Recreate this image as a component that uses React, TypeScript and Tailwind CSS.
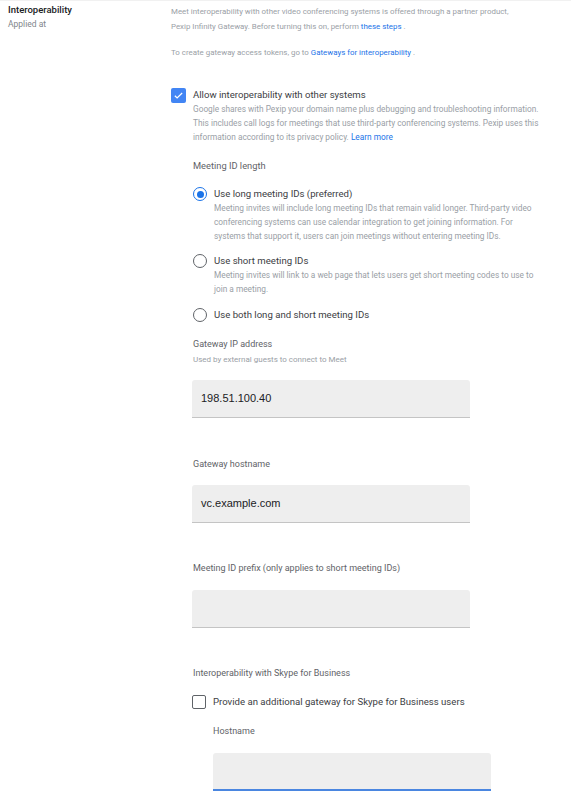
import React from "react";

const Input = ({ value, active, className = "" }: { value?: string; active?: boolean; className?: string }) => (
  <div
    className={`w-[278px] h-[38px] bg-[#eeeeee] rounded-t-[3px] flex items-center px-[9px] ${
      active ? "border-b-2 border-[#4a86e0]" : "border-b border-[#c4c4c4]"
    } ${className}`}
  >
    <span className="text-[11px] text-[#202124]" style={{ fontFamily: '"Liberation Sans", Arial, sans-serif' }}>
      {value}
    </span>
  </div>
);

const Radio = ({ checked }: { checked?: boolean }) => (
  <div
    className={`w-[14px] h-[14px] rounded-full border-[1.5px] flex items-center justify-center shrink-0 ${
      checked ? "border-[#1a73e8]" : "border-[#5f6368]"
    }`}
  >
    {checked && <div className="w-[7px] h-[7px] rounded-full bg-[#1a73e8]" />}
  </div>
);

export default function App() {
  return (
    <div
      className="w-[571px] h-[800px] bg-white flex overflow-hidden border-t border-[#f1f1f1]"
      style={{ fontFamily: 'Roboto, "Noto Sans", sans-serif' }}
    >
      <div className="w-[171px] shrink-0 pl-[8px] pt-[2px]">
        <div className="text-[9.5px] leading-[14px] font-medium text-[#202124]">Interoperability</div>
        <div className="text-[8.5px] leading-[14px] text-[#80868b]">Applied at</div>
      </div>
      <div className="flex-1 pt-[3px]">
        <div className="text-[7.9px] leading-[15px] text-[#9aa0a6] w-[340px]">
          Meet interoperability with other video conferencing systems is offered through a partner product, Pexip
          Infinity Gateway. Before turning this on, perform <span className="text-[#1a73e8]">these steps</span> .
        </div>
        <div className="mt-[11px] text-[7.9px] leading-[15px] text-[#9aa0a6]">
          To create gateway access tokens, go to <span className="text-[#1a73e8]">Gateways for interoperability</span> .
        </div>

        <div className="mt-[28px] flex gap-[7px]">
          <div className="w-[15px] h-[15px] rounded-[2px] bg-[#4285f4] flex items-center justify-center shrink-0">
            <svg width="11" height="11" viewBox="0 0 24 24">
              <path d="M4 12.5l5 5L20 6.5" fill="none" stroke="white" strokeWidth="2.6" />
            </svg>
          </div>
          <div>
            <div className="text-[9.6px] leading-[14px] text-[#3c4043]">Allow interoperability with other systems</div>
            <div className="text-[8.3px] leading-[14px] text-[#9aa0a6] w-[360px]">
              Google shares with Pexip your domain name plus debugging and troubleshooting information. This includes
              call logs for meetings that use third-party conferencing systems. Pexip uses this information according to
              its privacy policy. <span className="text-[#1a73e8]">Learn more</span>
            </div>

            <div className="mt-[15px] text-[9.3px] leading-[14px] text-[#5f6368]">Meeting ID length</div>

            <div className="mt-[14px] flex gap-[7px]">
              <Radio checked />
              <div>
                <div className="text-[9.6px] leading-[14px] text-[#3c4043]">Use long meeting IDs (preferred)</div>
                <div className="text-[8.3px] leading-[14px] text-[#9aa0a6] w-[330px]">
                  Meeting invites will include long meeting IDs that remain valid longer. Third-party video conferencing
                  systems can use calendar integration to get joining information. For systems that support it, users
                  can join meetings without entering meeting IDs.
                </div>
              </div>
            </div>

            <div className="mt-[11px] flex gap-[7px]">
              <Radio />
              <div>
                <div className="text-[9.6px] leading-[14px] text-[#3c4043]">Use short meeting IDs</div>
                <div className="text-[8.3px] leading-[14px] text-[#9aa0a6] w-[330px]">
                  Meeting invites will link to a web page that lets users get short meeting codes to use to join a
                  meeting.
                </div>
              </div>
            </div>

            <div className="mt-[12px] flex gap-[7px]">
              <Radio />
              <div className="text-[9.6px] leading-[14px] text-[#3c4043]">Use both long and short meeting IDs</div>
            </div>

            <div className="mt-[15px] text-[9px] leading-[14px] text-[#5f6368]">Gateway IP address</div>
            <div className="mt-[2px] text-[8px] leading-[14px] text-[#9aa0a6]">Used by external guests to connect to Meet</div>
            <Input value="198.51.100.40" className="mt-[13px] -ml-[1px]" />

            <div className="mt-[39px] text-[9px] leading-[14px] text-[#5f6368]">Gateway hostname</div>
            <Input value="vc.example.com" className="mt-[14px] -ml-[1px]" />

            <div className="mt-[38px] text-[9px] leading-[14px] text-[#5f6368]">
              Meeting ID prefix (only applies to short meeting IDs)
            </div>
            <Input className="mt-[15px] -ml-[1px]" />

            <div className="mt-[38px] text-[9px] leading-[14px] text-[#5f6368]">Interoperability with Skype for Business</div>
            <div className="mt-[15px] flex gap-[7px] items-center -ml-[1px]">
              <div className="w-[14px] h-[14px] rounded-[2px] border-[1.5px] border-[#5f6368] shrink-0" />
              <div className="text-[9.6px] leading-[14px] text-[#3c4043]">
                Provide an additional gateway for Skype for Business users
              </div>
            </div>
            <div className="ml-[20px]">
              <div className="mt-[15px] text-[9px] leading-[14px] text-[#5f6368]">Hostname</div>
              <Input active className="mt-[15px]" />
            </div>
          </div>
        </div>
      </div>
    </div>
  );
}
